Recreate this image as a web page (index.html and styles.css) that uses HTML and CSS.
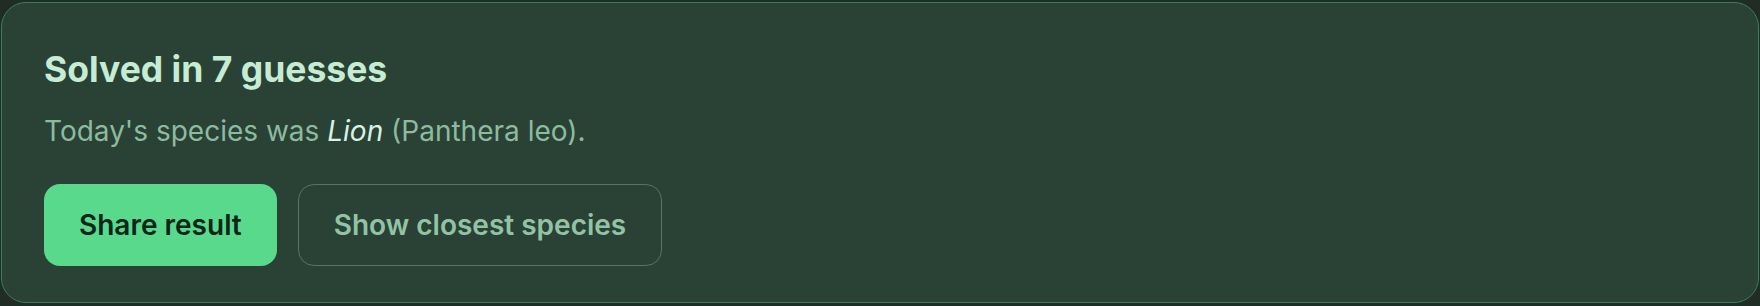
FILE: index.html
```html
<!DOCTYPE html>
<html lang="en">
<head>
  <meta charset="UTF-8" />
  <meta name="viewport" content="width=device-width, initial-scale=1.0" />
  <title>Solved</title>
  <link rel="stylesheet" href="styles.css">
</head>
<body>
  <div class="result-card">
    <h2 class="result-title">Solved in 7 guesses</h2>
    <p class="result-text">Today's species was <em>Lion</em> (Panthera leo).</p>
    <div class="result-actions">
      <button class="btn btn-primary">Share result</button>
      <button class="btn btn-outline">Show closest species</button>
    </div>
  </div>
</body>
</html>
```

FILE: styles.css
```css
html, body {
  height: 100%;
}
body {
  margin: 0;
  padding: 2px 1px 3px 1px;
  box-sizing: border-box;
  font-family: Inter, "Noto Sans", sans-serif;
  background-color: #1f2d26;
}
.result-card {
  box-sizing: border-box;
  height: 100%;
  background: #2a4136;
  border: 1.5px solid #3b7d58;
  border-radius: 25px;
  padding: 46px 42px 36px;
}
.result-title {
  margin: 0;
  font-size: 35.5px;
  line-height: 1.2;
  font-weight: 700;
  color: #c6ecd3;
}
.result-text {
  margin: 23px 0 0;
  font-size: 28px;
  line-height: 1.2;
  color: #8dbb9f;
}
.result-text em {
  color: #d9f2e2;
}
.result-actions {
  display: flex;
  gap: 21px;
  margin-top: 36px;
}
.btn {
  box-sizing: border-box;
  height: 82px;
  padding: 0 35px;
  border-radius: 16px;
  font-family: inherit;
  font-size: 28px;
  font-weight: 600;
  cursor: pointer;
}
.btn-primary {
  background: #58d98c;
  border: none;
  color: #0f2519;
}
.btn-outline {
  background: transparent;
  border: 1.5px solid #527763;
  color: #93c3a5;
}
```
